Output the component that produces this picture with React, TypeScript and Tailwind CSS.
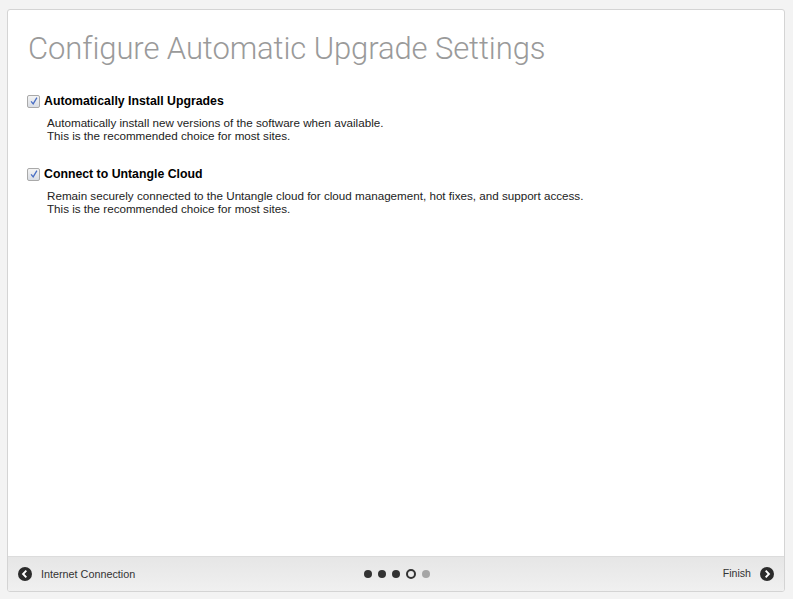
import { useState } from 'react';

function CheckBox({ checked, onChange }: { checked: boolean; onChange: () => void }) {
  return (
    <button
      onClick={onChange}
      className="w-[13px] h-[13px] border border-[#a9a9a9] rounded-[2px] bg-gradient-to-b from-[#f4f4f4] to-[#d9dde4] flex items-center justify-center shrink-0"
    >
      {checked && (
        <svg viewBox="0 0 12 12" className="w-[10px] h-[10px]">
          <path d="M2.5 6.5 L5 9.5 L9.5 2" fill="none" stroke="#4a6fc4" strokeWidth="1.6" />
        </svg>
      )}
    </button>
  );
}

function CircleArrow({ dir }: { dir: 'left' | 'right' }) {
  return (
    <svg viewBox="0 0 16 16" className="w-[14px] h-[14px]">
      <circle cx="8" cy="8" r="8" fill="#2b2b2b" />
      <path
        d={dir === 'left' ? 'M9.5 4.2 L5.8 8 L9.5 11.8' : 'M6.5 4.2 L10.2 8 L6.5 11.8'}
        fill="none"
        stroke="#fff"
        strokeWidth="2.2"
      />
    </svg>
  );
}

export default function App() {
  const [autoUpgrade, setAutoUpgrade] = useState(true);
  const [cloud, setCloud] = useState(true);

  const options = [
    {
      label: 'Automatically Install Upgrades',
      checked: autoUpgrade,
      toggle: () => setAutoUpgrade(!autoUpgrade),
      lines: [
        'Automatically install new versions of the software when available.',
        'This is the recommended choice for most sites.',
      ],
    },
    {
      label: 'Connect to Untangle Cloud',
      checked: cloud,
      toggle: () => setCloud(!cloud),
      lines: [
        'Remain securely connected to the Untangle cloud for cloud management, hot fixes, and support access.',
        'This is the recommended choice for most sites.',
      ],
    },
  ];

  return (
    <div className="w-[793px] h-[599px] bg-[#f3f3f3] pt-[9px] pl-[7px] pr-[8px] pb-[7px] font-['Liberation_Sans',sans-serif]">
      <div className="h-full flex flex-col bg-white border border-[#d4d4d4] rounded-[3px] overflow-hidden">
        {/* Body */}
        <div className="flex-1 pl-[19px] pr-[20px] pt-[20px]">
          <h1 className="font-['Roboto',sans-serif] font-light text-[31px] leading-[38px] tracking-[-0.1px] text-[#9a9a9a] pl-[1px]">
            Configure Automatic Upgrade Settings
          </h1>
          <div className="mt-[26px] space-y-[25px]">
            {options.map((opt) => (
              <div key={opt.label}>
                <div className="flex items-center gap-[4px] h-[14px]">
                  <CheckBox checked={opt.checked} onChange={opt.toggle} />
                  <span className="text-[12.3px] leading-[14px] font-bold text-black">{opt.label}</span>
                </div>
                <div className="mt-[8px] pl-[20px] text-[11.65px] leading-[13px] text-[#222]">
                  {opt.lines.map((l) => (
                    <div key={l}>{l}</div>
                  ))}
                </div>
              </div>
            ))}
          </div>
        </div>

        {/* Footer */}
        <div className="h-[35px] shrink-0 border-t border-[#dcdcdc] bg-gradient-to-b from-[#e6e6e6] to-[#f0f0f0] flex items-center px-[10px]">
          <div className="flex-1 flex items-center gap-[9px]">
            <CircleArrow dir="left" />
            <span className="text-[10.8px] text-[#333]">Internet Connection</span>
          </div>
          <div className="flex items-center gap-[6px] ml-[2px]">
            <span className="w-[8px] h-[8px] rounded-full bg-[#333]" />
            <span className="w-[8px] h-[8px] rounded-full bg-[#333]" />
            <span className="w-[8px] h-[8px] rounded-full bg-[#333]" />
            <span className="w-[10px] h-[10px] rounded-full border-2 border-[#333]" />
            <span className="w-[8px] h-[8px] rounded-full bg-[#a6a6a6]" />
          </div>
          <div className="flex-1 flex items-center justify-end gap-[9px]">
            <span className="text-[10.6px] text-[#333]">Finish</span>
            <CircleArrow dir="right" />
          </div>
        </div>
      </div>
    </div>
  );
}
